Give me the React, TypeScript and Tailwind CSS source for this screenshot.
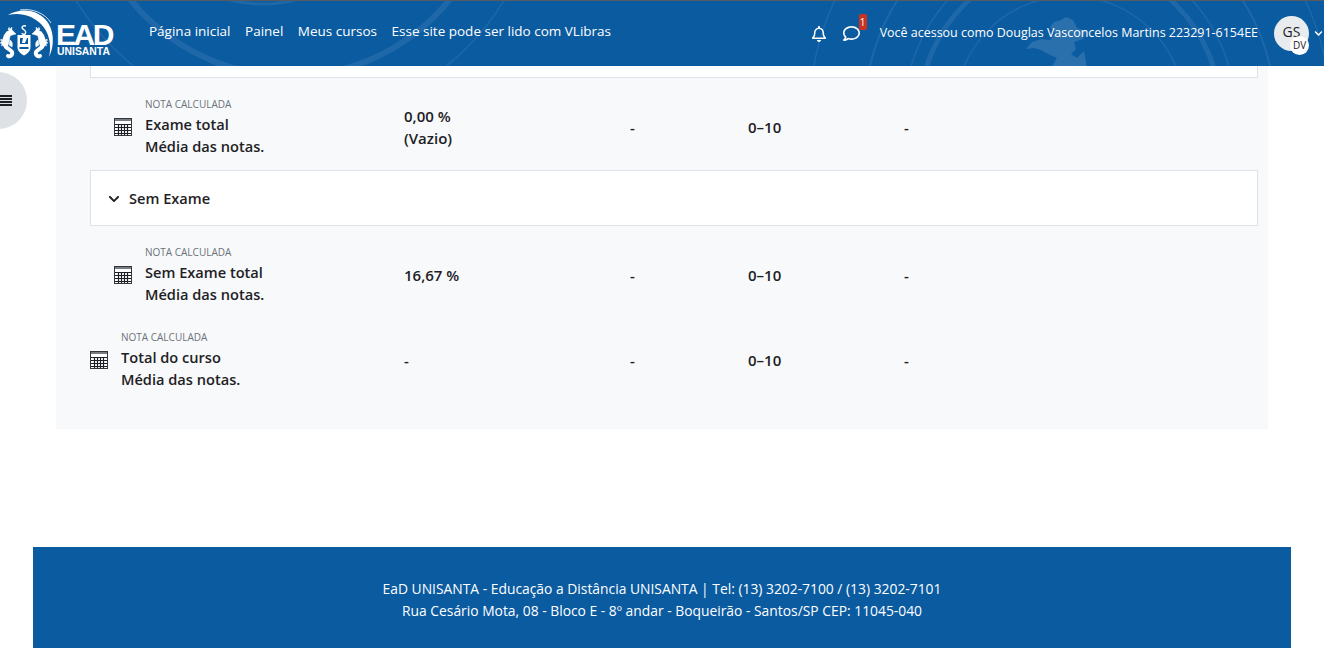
import { FC } from "react";
import { FaChevronDown, FaRegBell, FaRegComment } from "react-icons/fa";

const font = "font-['Open_Sans',sans-serif]";

const CalcIcon: FC = () => (
  <svg width="18" height="18" viewBox="0 0 18 18" className="shrink-0">
    <rect x="0.5" y="0.5" width="17" height="17" fill="#fff" stroke="#33383d" />
    <rect x="1" y="1" width="16" height="2" fill="#777c82" />
    <path
      d="M1 6.5h16M1 9.5h16M1 12.5h16M1 15.5h16M4.5 6v11M7.5 6v11M10.5 6v11M13.5 6v11"
      stroke="#1d2125"
      strokeWidth="1.2"
      fill="none"
    />
  </svg>
);

const Seahorse: FC = () => (
  <g fill="#fff" stroke="#fff">
    <path
      d="M8 29C4 33 3 39 6 43c2 2 5 3 6 5 1 3-2 5-4 4"
      fill="none"
      strokeWidth="4"
      strokeLinecap="round"
    />
    <path d="M6 30c2-4 6-5 7-3l3 3-4 1-2 1-1 6-2 6-3-4z" strokeWidth="0.5" />
    <path d="M2 35l-2 1 2 1-2 2 2 1-1 2 3-1zM8 26l1-3 1 2 2-2v4z" strokeWidth="0.3" />
    <path d="M10 36c2 1 3 4 2 7l-3-2z" strokeWidth="0.5" />
  </g>
);

const Logo: FC = () => (
  <div className="relative h-[60px] w-[114px] shrink-0 text-white">
    <svg width="60" height="60" viewBox="0 0 60 60" className="absolute left-0 top-0">
      <path d="M8 11C20 4 36 5 46 16c8 9 9 25 3 37 3-12 0-25-8-33C32 11 20 8 8 11z" fill="#fff" />
      <path d="M20 6c12-2 25 3 31 13" stroke="#fff" strokeWidth="0.8" fill="none" />
      <Seahorse />
      <g transform="translate(48 0) scale(-1 1)">
        <Seahorse />
      </g>
      <path d="M17.5 31h13v12c0 4-3 6.500-6.500 8.500-3.500-2-6.500-4.500-6.500-8.500z" fill="#fff" />
      <path d="M19.500 43h9v2h-9z" fill="#0b5ba1" />
      <path
        d="M26 22c-3-1-5 1-3 3s4 2 2 5c-1 1-3 0-3-1"
        stroke="#fff"
        strokeWidth="1.4"
        fill="none"
      />
      <path d="M20 34h8v6h-8z" fill="#0b5ba1" />
      <path d="M24 29l3 5-2 5h-3z" fill="#fff" />
    </svg>
    <span className="absolute left-[56px] top-[21px] font-['Liberation_Sans',sans-serif] text-[30px] leading-[20px] font-bold tracking-[-2.500px]">
      EAD
    </span>
    <span className="absolute left-[57px] top-[43px] font-['Liberation_Sans',sans-serif] text-[10.400px] leading-[10px] font-bold">
      UNISANTA
    </span>
  </div>
);

const NavWatermark: FC = () => (
  <svg width="1324" height="66" viewBox="0 0 1324 66" className="absolute left-0 top-0" fill="none">
    <g stroke="#fff" strokeOpacity="0.08">
      <circle cx="290" cy="-130" r="205" strokeWidth="6" />
      <circle cx="290" cy="-130" r="250" strokeWidth="1.500" />
      <circle cx="262" cy="-130" r="133" strokeWidth="3" />
      <circle cx="1070" cy="110" r="115" strokeWidth="1.500" />
      <circle cx="1070" cy="110" r="150" strokeWidth="5" />
      <circle cx="1070" cy="110" r="165" strokeWidth="1.500" />
      <circle cx="1070" cy="110" r="205" strokeWidth="2" />
      <circle cx="1070" cy="110" r="260" strokeWidth="1.500" />
    </g>
    <path
      d="M1066 16l7 3 4 8 9 3-3 8-9 3 2 7-5 5 6 4 7-7 3 17h-36l6-10-7-3-9-5-7-2-8 1 6-7 9-3 9 1 5-7-5-6 4-5 7-2z"
      fill="#fff"
      fillOpacity="0.13"
    />
  </svg>
);

const GradeRow: FC<{ name: string; grade: string[]; nested?: boolean; h: string; pt: string }> = ({
  name,
  grade,
  nested,
  h,
  pt,
}) => (
  <div className={`flex items-center ${pt} ${h} text-[15px] leading-[22px] font-semibold text-[#1d2125]`}>
    <div className={`flex w-[314px] items-center ${nested ? "pl-[24px]" : ""}`}>
      <CalcIcon />
      <div className="ml-[13px] text-[14.600px]">
        <div className="text-[10px] leading-[14px] font-normal text-[#6a737b]">NOTA CALCULADA</div>
        <div className="mt-[2px]">{name}</div>
        <div>Média das notas.</div>
      </div>
    </div>
    <div className="w-[226px]">
      {grade.map((g) => (
        <div key={g}>{g}</div>
      ))}
    </div>
    <div className="w-[118px]">-</div>
    <div className="w-[156px]">0–10</div>
    <div>-</div>
  </div>
);

const App: FC = () => (
  <div className={`relative min-h-[648px] overflow-hidden bg-white ${font}`}>
    <nav className="relative flex h-[66px] items-center overflow-hidden border-t border-[#555b60] bg-[#0b5ba1] text-white">
      <NavWatermark />
      <div className="relative flex w-full items-center">
        <Logo />
        <div className="ml-[35px] flex gap-[14.500px] pb-[4px] text-[13.500px]">
          <span>Página inicial</span>
          <span>Painel</span>
          <span>Meus cursos</span>
          <span>Esse site pode ser lido com VLibras</span>
        </div>
        <div className="ml-auto flex items-center">
          <FaRegBell className="text-[16px]" />
          <div className="relative ml-[16px]">
            <FaRegComment className="text-[17px]" />
            <span className="absolute -right-[7px] -top-[11px] flex h-[16px] w-[8px] items-center justify-center rounded-[2px] bg-[#ca3120] text-[10px]">
              1
            </span>
          </div>
          <span className="ml-[20px] text-[12.470px]">Você acessou como Douglas Vasconcelos Martins 223291-6154EE</span>
          <div className="relative ml-[16px] flex h-[35px] w-[35px] items-center justify-center rounded-full bg-[#e9ecef] pb-[4px] text-[14px] text-[#1d2125]">
            GS
            <span className="absolute -bottom-[4px] right-0 flex h-[19px] w-[19px] items-center justify-center rounded-full bg-white text-[10px]">
              DV
            </span>
          </div>
          <FaChevronDown className="ml-[5px] mr-[1px] text-[9px]" />
        </div>
      </div>
    </nav>

    <div className="absolute -left-[30px] top-[72px] flex h-[57px] w-[57px] flex-col items-end justify-center gap-[1px] rounded-full bg-[#dee2e6] pr-[15px]">
      <div className="h-[2px] w-[12px] bg-[#1d2125]" />
      <div className="h-[2px] w-[12px] bg-[#1d2125]" />
      <div className="h-[2px] w-[12px] bg-[#1d2125]" />
      <div className="h-[2px] w-[12px] bg-[#1d2125]" />
    </div>

    <main className="mx-[56px] bg-[#f8f9fa] pb-[33px] pl-[34px] pr-[10px]">
      <div className="h-[12px] border-x border-b border-[#dee2e6] bg-white" />
      <GradeRow nested name="Exame total" grade={["0,00 %", "(Vazio)"]} h="h-[92px]" pt="pt-[6px]" />
      <div className="flex h-[56px] items-center border border-[#dee2e6] bg-white pl-[17px] pt-[1px] text-[14.600px] font-semibold text-[#1d2125]">
        <FaChevronDown className="text-[12px]" />
        <span className="ml-[9px]">Sem Exame</span>
      </div>
      <GradeRow nested name="Sem Exame total" grade={["16,67 %"]} h="h-[90px]" pt="pt-[8px]" />
      <GradeRow name="Total do curso" grade={["-"]} h="h-[80px]" pt="pt-[8px]" />
    </main>

    <footer className="mx-[33px] mt-[118px] flex h-[101px] flex-col items-center justify-center bg-[#0b5ba1] pt-[4px] text-[13.850px] leading-[22px] text-white">
      <div>EaD UNISANTA - Educação a Distância UNISANTA | Tel: (13) 3202-7100 / (13) 3202-7101</div>
      <div>Rua Cesário Mota, 08 - Bloco E - 8º andar - Boqueirão - Santos/SP CEP: 11045-040</div>
    </footer>
  </div>
);

export default App;
